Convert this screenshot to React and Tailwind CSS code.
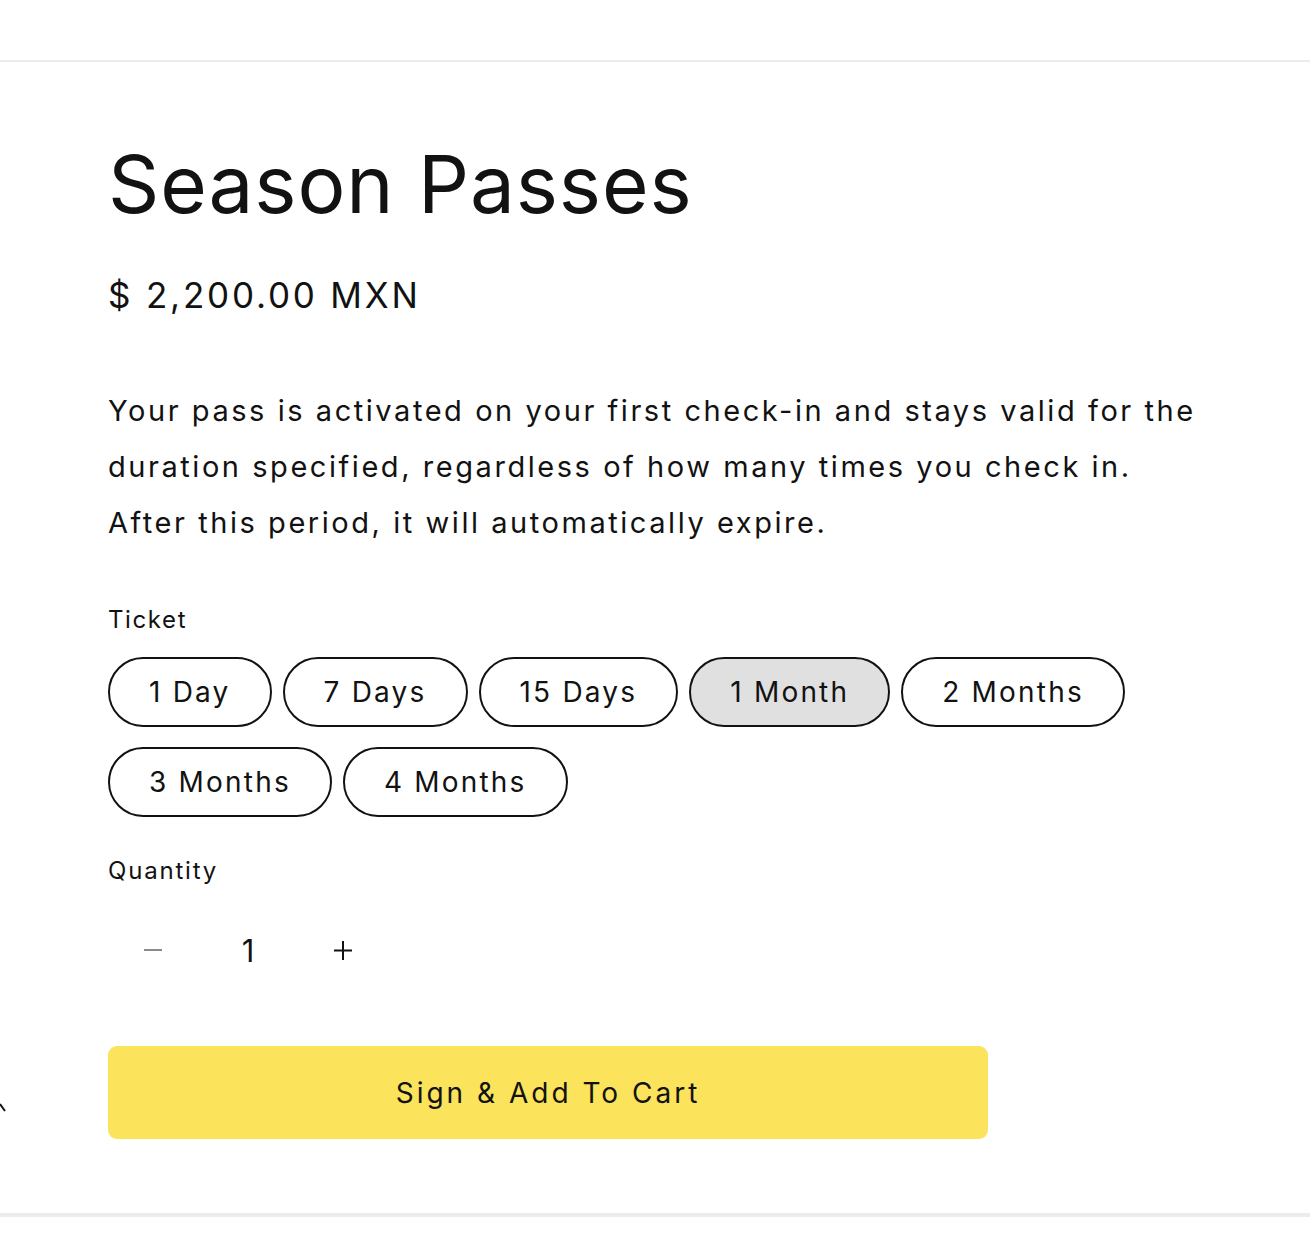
import { useState } from 'react'

const tickets = ['1 Day', '7 Days', '15 Days', '1 Month', '2 Months', '3 Months', '4 Months']

export default function App() {
  const [selected, setSelected] = useState('1 Month')
  const [qty, setQty] = useState(1)

  return (
    <div className="relative min-h-[1258px] bg-white text-[#121212] font-['Inter',sans-serif]">
      <div className="h-[62px] border-b-2 border-[#ececec]" />

      <div className="pl-[108px] pt-[70px] pb-[74px] pr-[40px]">
        <h1 className="text-[80px] leading-[104px] tracking-[0.9px] font-normal">Season Passes</h1>

        <p className="mt-[33px] text-[35px] leading-[52px] tracking-[2.8px]">$ 2,200.00 MXN</p>

        <p className="mt-[62px] text-[29px] leading-[56px] tracking-[2.55px]">
          Your pass is activated on your first check-in and stays valid for the
          <br />
          duration specified, regardless of how many times you check in.
          <br />
          After this period, it will automatically expire.
        </p>

        <div className="mt-[57px]">
          <p className="text-[24px] leading-[24px] tracking-[1.6px]">Ticket</p>
          <div className="mt-[25px] flex flex-wrap gap-x-[11px] gap-y-[20px] max-w-[1140px]">
            {tickets.map((t) => (
              <button
                key={t}
                onClick={() => setSelected(t)}
                className={
                  'h-[70px] px-[39px] rounded-full border-2 border-[#121212] text-[28px] tracking-[2.2px] leading-none flex items-center ' +
                  (selected === t ? 'bg-[#e0e0e0]' : 'bg-white')
                }
              >
                {t}
              </button>
            ))}
          </div>
        </div>

        <p className="mt-[42px] text-[24px] leading-[24px] tracking-[1.8px]">Quantity</p>
        <div className="mt-[22px] flex h-[90px] w-[280px] items-center">
          <button
            onClick={() => setQty((q) => Math.max(1, q - 1))}
            className="flex h-full w-[90px] items-center justify-center"
          >
            <svg width="18" height="2" viewBox="0 0 18 2">
              <rect width="18" height="2" fill={qty <= 1 ? '#8a8a8a' : '#121212'} />
            </svg>
          </button>
          <div className="flex h-full w-[100px] items-center justify-center text-[31px] leading-none">{qty}</div>
          <button onClick={() => setQty((q) => q + 1)} className="flex h-full w-[90px] items-center justify-center">
            <svg width="18" height="19" viewBox="0 0 18 19">
              <rect x="0" y="8.5" width="18" height="2" fill="#121212" />
              <rect x="8" y="0" width="2" height="19" fill="#121212" />
            </svg>
          </button>
        </div>

        <button className="mt-[51px] flex h-[93px] w-[880px] items-center justify-center rounded-[9px] bg-[#fbe35b] text-[28px] tracking-[3px]">
          Sign &amp; Add To Cart
        </button>
      </div>

      <div className="border-t-4 border-[#ececec]" />

      <svg className="absolute left-0 top-[1103px]" width="6" height="10" viewBox="0 0 6 10">
        <path d="M0 1 L5 8" stroke="#121212" strokeWidth="2" fill="none" />
      </svg>
    </div>
  )
}
